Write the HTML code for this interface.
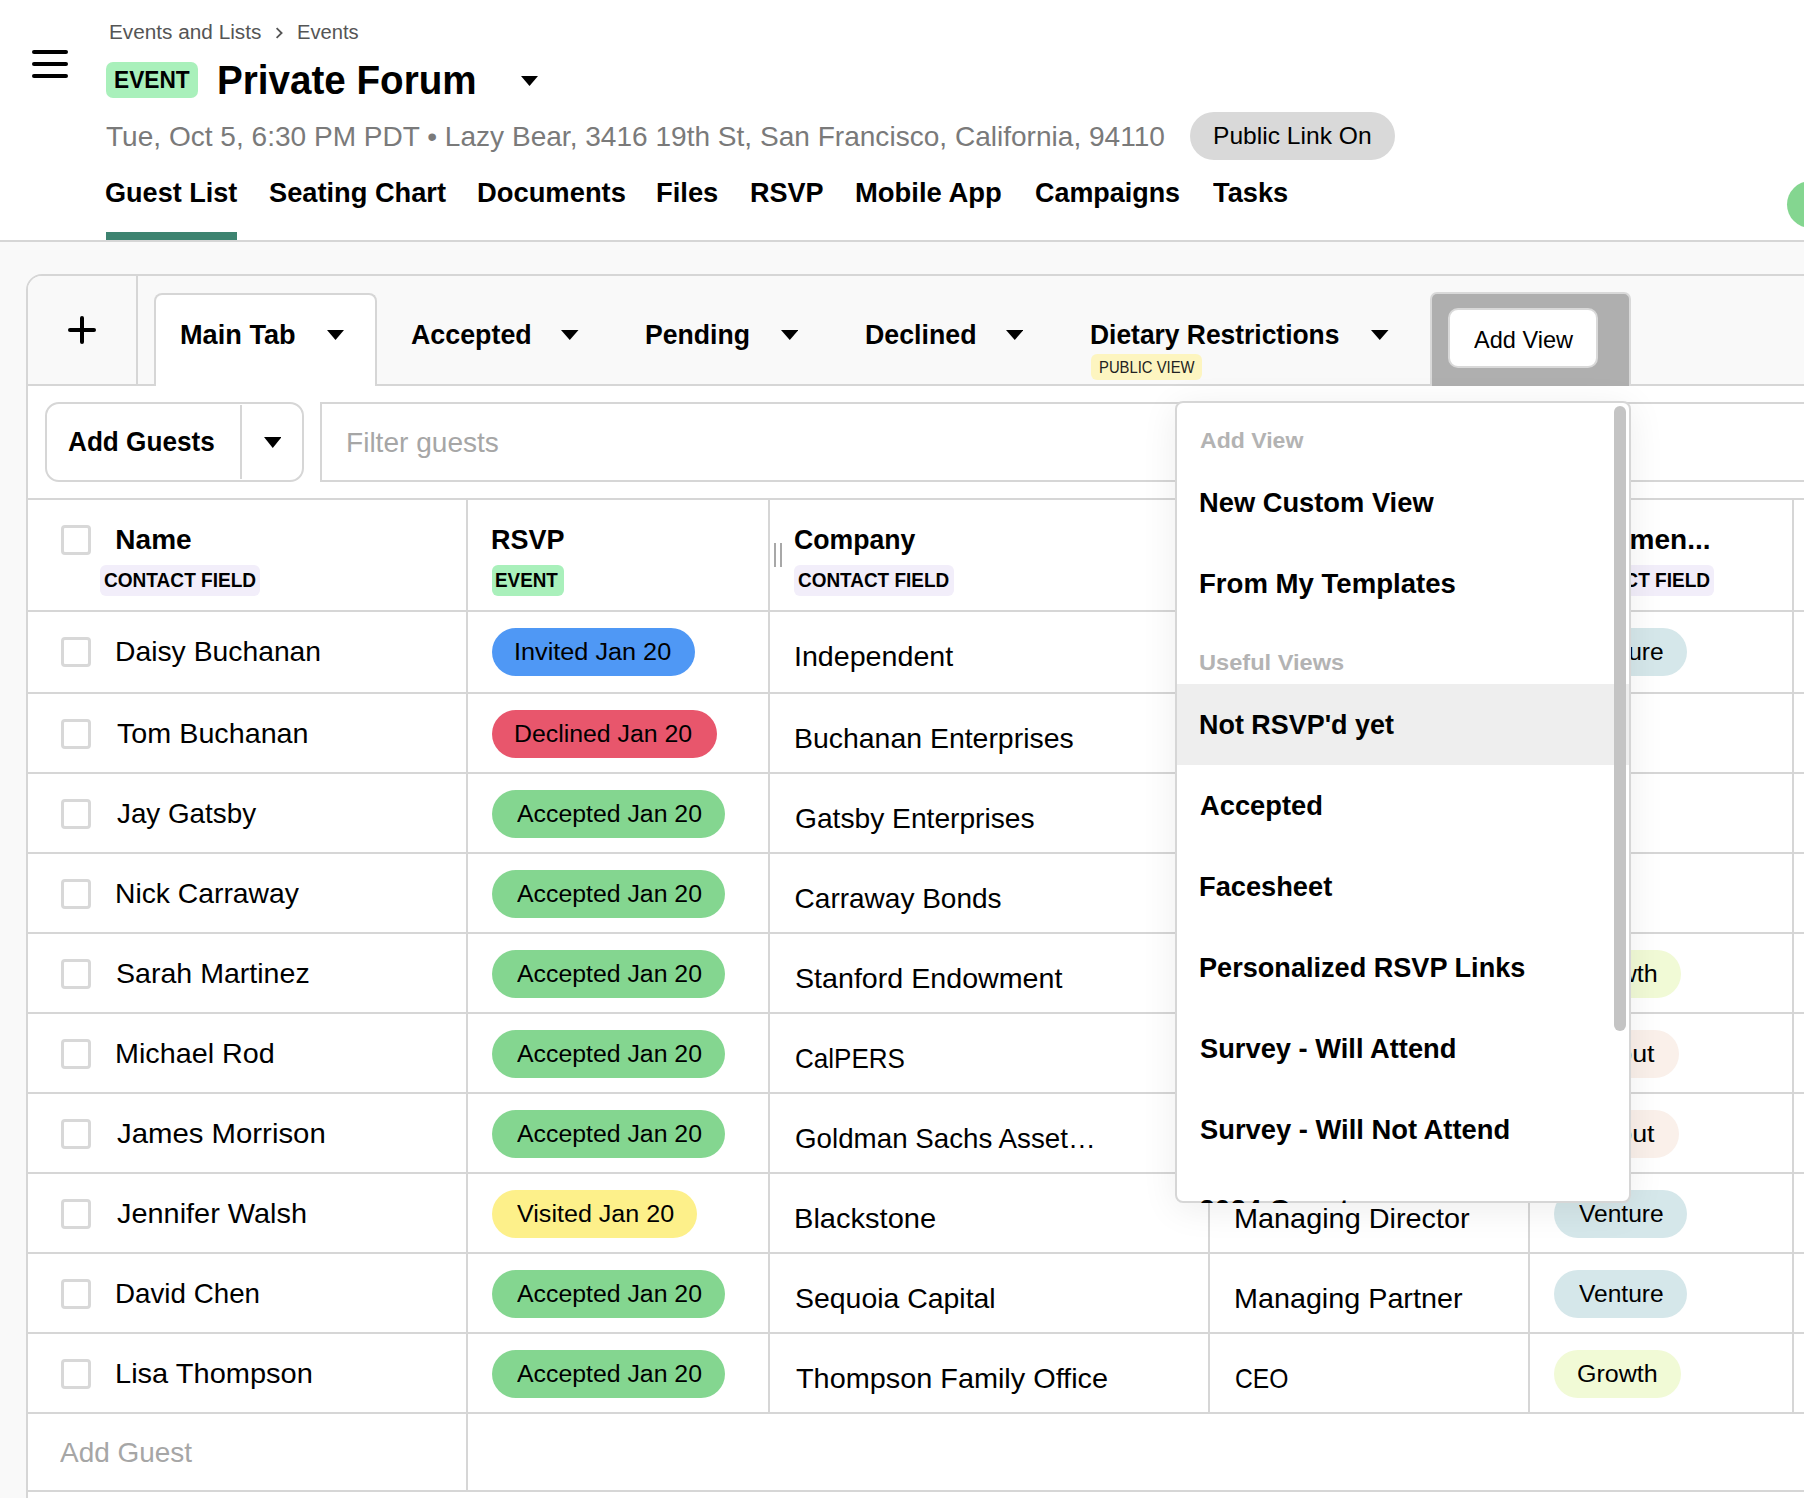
<!DOCTYPE html>
<html><head><meta charset="utf-8"><style>
html,body{margin:0;padding:0;width:1804px;height:1498px;overflow:hidden;background:#f9f9f9;font-family:"Liberation Sans",sans-serif;}
</style></head><body>
<div style="position:absolute;left:0px;top:0px;width:1804px;height:240px;background:#ffffff;"></div>
<div style="position:absolute;left:0px;top:240px;width:1804px;height:2px;background:#d6d6d6;"></div>
<div style="position:absolute;left:0px;top:242px;width:1804px;height:1256px;background:#f9f9f9;"></div>
<div style="position:absolute;left:32px;top:50.25px;width:36px;height:3.5px;background:#000;border-radius:2px;"></div>
<div style="position:absolute;left:32px;top:62.25px;width:36px;height:3.5px;background:#000;border-radius:2px;"></div>
<div style="position:absolute;left:32px;top:74.25px;width:36px;height:3.5px;background:#000;border-radius:2px;"></div>
<div style="position:absolute;left:108.94px;top:21px;font-size:20px;line-height:22px;font-weight:400;color:#555;white-space:pre;transform:scaleX(1.0381);transform-origin:0 0;">Events and Lists</div>
<svg style="position:absolute;left:274px;top:26px" width="12" height="14" viewBox="0 0 12 14"><path d="M2.6 2.2 L7.6 7 L2.6 11.8" fill="none" stroke="#555" stroke-width="1.8"/></svg>
<div style="position:absolute;left:296.99px;top:21px;font-size:20px;line-height:22px;font-weight:400;color:#555;white-space:pre;transform:scaleX(1.0085);transform-origin:0 0;">Events</div>
<div style="position:absolute;left:106px;top:62px;width:92px;height:36px;background:#a9f0bb;border-radius:7px;"></div>
<div style="position:absolute;left:113.52px;top:67px;font-size:23px;line-height:26px;font-weight:700;color:#000;white-space:pre;transform:scaleX(0.9867);transform-origin:0 0;">EVENT</div>
<div style="position:absolute;left:217.35px;top:58.3px;font-size:40px;line-height:44px;font-weight:700;color:#000;white-space:pre;transform:scaleX(0.9653);transform-origin:0 0;">Private Forum</div>
<svg style="position:absolute;left:521px;top:76px" width="17" height="10" viewBox="0 0 17 10"><path d="M0 0 L17 0 L8.5 10 Z" fill="#000"/></svg>
<div style="position:absolute;left:105.50px;top:120.5px;font-size:28px;line-height:31px;font-weight:400;color:#7a7a7a;white-space:pre;transform:scaleX(1.0021);transform-origin:0 0;">Tue, Oct 5, 6:30 PM PDT • Lazy Bear, 3416 19th St, San Francisco, California, 94110</div>
<div style="position:absolute;left:1190px;top:112px;width:205px;height:48px;background:#d9d9d9;border-radius:24px;"></div>
<div style="position:absolute;left:1213.35px;top:121.80000000000001px;font-size:24px;line-height:27px;font-weight:400;color:#000;white-space:pre;transform:scaleX(1.0248);transform-origin:0 0;">Public Link On</div>
<div style="position:absolute;left:105.03px;top:177px;font-size:28px;line-height:31px;font-weight:700;color:#000;white-space:pre;transform:scaleX(0.9668);transform-origin:0 0;">Guest List</div>
<div style="position:absolute;left:269.27px;top:177px;font-size:28px;line-height:31px;font-weight:700;color:#000;white-space:pre;transform:scaleX(0.9724);transform-origin:0 0;">Seating Chart</div>
<div style="position:absolute;left:476.89px;top:177px;font-size:28px;line-height:31px;font-weight:700;color:#000;white-space:pre;transform:scaleX(0.9766);transform-origin:0 0;">Documents</div>
<div style="position:absolute;left:656.29px;top:177px;font-size:28px;line-height:31px;font-weight:700;color:#000;white-space:pre;transform:scaleX(0.9770);transform-origin:0 0;">Files</div>
<div style="position:absolute;left:750.31px;top:177px;font-size:28px;line-height:31px;font-weight:700;color:#000;white-space:pre;transform:scaleX(0.9660);transform-origin:0 0;">RSVP</div>
<div style="position:absolute;left:854.99px;top:177px;font-size:28px;line-height:31px;font-weight:700;color:#000;white-space:pre;transform:scaleX(0.9797);transform-origin:0 0;">Mobile App</div>
<div style="position:absolute;left:1035.04px;top:177px;font-size:28px;line-height:31px;font-weight:700;color:#000;white-space:pre;transform:scaleX(0.9613);transform-origin:0 0;">Campaigns</div>
<div style="position:absolute;left:1212.76px;top:177px;font-size:28px;line-height:31px;font-weight:700;color:#000;white-space:pre;transform:scaleX(0.9737);transform-origin:0 0;">Tasks</div>
<div style="position:absolute;left:106px;top:232px;width:131px;height:8px;background:#3d8370;"></div>
<div style="position:absolute;left:1787px;top:180.5px;width:47px;height:47px;border-radius:50%;background:#84d690"></div>
<div style="position:absolute;left:26px;top:274px;width:1800px;height:1300px;background:#fff;border:2px solid #d6d6d6;border-top-left-radius:16px;box-sizing:border-box"></div>
<div style="position:absolute;left:28px;top:276px;width:1790px;height:109px;background:#f9f9f9;border-top-left-radius:14px"></div>
<div style="position:absolute;left:136px;top:276px;width:2px;height:109px;background:#d6d6d6;"></div>
<div style="position:absolute;left:28px;top:384px;width:1776px;height:2px;background:#d6d6d6;"></div>
<div style="position:absolute;left:68px;top:328px;width:28px;height:4px;background:#000;border-radius:2px;"></div>
<div style="position:absolute;left:80px;top:316px;width:4px;height:28px;background:#000;border-radius:2px;"></div>
<div style="position:absolute;left:154px;top:292.5px;width:222.5px;height:93.5px;background:#fff;border:2px solid #d6d6d6;border-bottom:none;border-radius:8px 8px 0 0;box-sizing:border-box"></div>
<div style="position:absolute;left:179.70px;top:319px;font-size:28px;line-height:31px;font-weight:700;color:#000;white-space:pre;transform:scaleX(0.9700);transform-origin:0 0;">Main Tab</div>
<svg style="position:absolute;left:326.7px;top:330px" width="17" height="10" viewBox="0 0 17 10"><path d="M0 0 L17 0 L8.5 10 Z" fill="#000"/></svg>
<div style="position:absolute;left:410.58px;top:319px;font-size:28px;line-height:31px;font-weight:700;color:#000;white-space:pre;transform:scaleX(0.9579);transform-origin:0 0;">Accepted</div>
<svg style="position:absolute;left:561px;top:330px" width="17.5" height="10" viewBox="0 0 17.5 10"><path d="M0 0 L17.5 0 L8.75 10 Z" fill="#000"/></svg>
<div style="position:absolute;left:645.24px;top:319px;font-size:28px;line-height:31px;font-weight:700;color:#000;white-space:pre;transform:scaleX(0.9499);transform-origin:0 0;">Pending</div>
<svg style="position:absolute;left:780.7px;top:330px" width="17.5" height="10" viewBox="0 0 17.5 10"><path d="M0 0 L17.5 0 L8.75 10 Z" fill="#000"/></svg>
<div style="position:absolute;left:864.53px;top:319px;font-size:28px;line-height:31px;font-weight:700;color:#000;white-space:pre;transform:scaleX(0.9554);transform-origin:0 0;">Declined</div>
<svg style="position:absolute;left:1005.7px;top:330px" width="17.5" height="10" viewBox="0 0 17.5 10"><path d="M0 0 L17.5 0 L8.75 10 Z" fill="#000"/></svg>
<div style="position:absolute;left:1090.25px;top:319px;font-size:28px;line-height:31px;font-weight:700;color:#000;white-space:pre;transform:scaleX(0.9429);transform-origin:0 0;">Dietary Restrictions</div>
<svg style="position:absolute;left:1371px;top:330px" width="17.5" height="10" viewBox="0 0 17.5 10"><path d="M0 0 L17.5 0 L8.75 10 Z" fill="#000"/></svg>
<div style="position:absolute;left:1091px;top:354px;width:111px;height:26px;background:#fdf5c0;border-radius:6px;"></div>
<div style="position:absolute;left:1098.54px;top:358.8px;font-size:16px;line-height:17px;font-weight:400;color:#222;white-space:pre;transform:scaleX(0.9268);transform-origin:0 0;">PUBLIC VIEW</div>
<div style="position:absolute;left:1430px;top:292px;width:201px;height:94px;background:#afafaf;border:2px solid #d9d9d9;border-bottom:none;border-radius:7px 7px 0 0;box-sizing:border-box"></div>
<div style="position:absolute;left:1448px;top:308px;width:150px;height:59.5px;background:#fff;border:2px solid #d9d9d9;border-radius:10px;box-sizing:border-box"></div>
<div style="position:absolute;left:1474.00px;top:326px;font-size:24px;line-height:27px;font-weight:400;color:#000;white-space:pre;transform:scaleX(0.9802);transform-origin:0 0;">Add View</div>
<div style="position:absolute;left:45px;top:402px;width:259px;height:79.5px;background:#fff;border:2px solid #d6d6d6;border-radius:14px;box-sizing:border-box"></div>
<div style="position:absolute;left:240px;top:405px;width:2px;height:74px;background:#d6d6d6;"></div>
<div style="position:absolute;left:68.10px;top:425.7px;font-size:28px;line-height:31px;font-weight:700;color:#000;white-space:pre;transform:scaleX(0.9340);transform-origin:0 0;">Add Guests</div>
<svg style="position:absolute;left:263.5px;top:437px" width="17.5" height="11" viewBox="0 0 17.5 11"><path d="M0 0 L17.5 0 L8.75 11 Z" fill="#000"/></svg>
<div style="position:absolute;left:320px;top:402px;width:1600px;height:80px;background:#fff;border:2px solid #d6d6d6;box-sizing:border-box"></div>
<div style="position:absolute;left:345.74px;top:426.7px;font-size:28px;line-height:31px;font-weight:400;color:#a6a6a6;white-space:pre;transform:scaleX(1.0023);transform-origin:0 0;">Filter guests</div>
<div style="position:absolute;left:28px;top:498px;width:1776px;height:2px;background:#d6d6d6;"></div>
<div style="position:absolute;left:28px;top:610px;width:1776px;height:2px;background:#d6d6d6;"></div>
<div style="position:absolute;left:28px;top:692px;width:1776px;height:2px;background:#d6d6d6;"></div>
<div style="position:absolute;left:28px;top:772px;width:1776px;height:2px;background:#d6d6d6;"></div>
<div style="position:absolute;left:28px;top:852px;width:1776px;height:2px;background:#d6d6d6;"></div>
<div style="position:absolute;left:28px;top:932px;width:1776px;height:2px;background:#d6d6d6;"></div>
<div style="position:absolute;left:28px;top:1012px;width:1776px;height:2px;background:#d6d6d6;"></div>
<div style="position:absolute;left:28px;top:1092px;width:1776px;height:2px;background:#d6d6d6;"></div>
<div style="position:absolute;left:28px;top:1172px;width:1776px;height:2px;background:#d6d6d6;"></div>
<div style="position:absolute;left:28px;top:1252px;width:1776px;height:2px;background:#d6d6d6;"></div>
<div style="position:absolute;left:28px;top:1332px;width:1776px;height:2px;background:#d6d6d6;"></div>
<div style="position:absolute;left:28px;top:1412px;width:1776px;height:2px;background:#d6d6d6;"></div>
<div style="position:absolute;left:28px;top:1490px;width:1776px;height:2px;background:#d6d6d6;"></div>
<div style="position:absolute;left:466px;top:500px;width:2px;height:912px;background:#d6d6d6;"></div>
<div style="position:absolute;left:768px;top:500px;width:2px;height:912px;background:#d6d6d6;"></div>
<div style="position:absolute;left:1208px;top:500px;width:2px;height:912px;background:#d6d6d6;"></div>
<div style="position:absolute;left:1528px;top:500px;width:2px;height:912px;background:#d6d6d6;"></div>
<div style="position:absolute;left:1792px;top:500px;width:2px;height:912px;background:#d6d6d6;"></div>
<div style="position:absolute;left:466px;top:1412px;width:2px;height:78px;background:#d6d6d6;"></div>
<div style="position:absolute;left:61.3px;top:525.3px;width:29.5px;height:29.5px;border:3.5px solid #d8d8d8;border-radius:4px;box-sizing:border-box;background:#fff"></div>
<div style="position:absolute;left:115.35px;top:524px;font-size:28px;line-height:31px;font-weight:700;color:#000;white-space:pre;">Name</div>
<div style="position:absolute;left:100px;top:564.5px;width:159.5px;height:31.0px;background:#f2eefa;border-radius:6px;"></div>
<div style="position:absolute;left:103.79px;top:569px;font-size:20px;line-height:22px;font-weight:700;color:#000;white-space:pre;transform:scaleX(0.9532);transform-origin:0 0;">CONTACT FIELD</div>
<div style="position:absolute;left:491.21px;top:524px;font-size:28px;line-height:31px;font-weight:700;color:#000;white-space:pre;transform:scaleX(0.9633);transform-origin:0 0;">RSVP</div>
<div style="position:absolute;left:492px;top:564.5px;width:72px;height:31.0px;background:#a9f0bb;border-radius:6px;"></div>
<div style="position:absolute;left:495.32px;top:569px;font-size:20px;line-height:22px;font-weight:700;color:#000;white-space:pre;transform:scaleX(0.9425);transform-origin:0 0;">EVENT</div>
<div style="position:absolute;left:774px;top:543px;width:2px;height:24px;background:#a8a8a8;"></div>
<div style="position:absolute;left:780px;top:543px;width:2px;height:24px;background:#a8a8a8;"></div>
<div style="position:absolute;left:793.95px;top:523.8px;font-size:28px;line-height:31px;font-weight:700;color:#000;white-space:pre;transform:scaleX(0.9510);transform-origin:0 0;">Company</div>
<div style="position:absolute;left:794px;top:564.5px;width:159.5px;height:31.0px;background:#f2eefa;border-radius:6px;"></div>
<div style="position:absolute;left:798.09px;top:569px;font-size:20px;line-height:22px;font-weight:700;color:#000;white-space:pre;transform:scaleX(0.9468);transform-origin:0 0;">CONTACT FIELD</div>
<div style="position:absolute;left:1578.25px;top:524px;font-size:28px;line-height:31px;font-weight:700;color:#000;white-space:pre;">Segmen...</div>
<div style="position:absolute;left:1554px;top:564.5px;width:160px;height:31.0px;background:#f2eefa;border-radius:6px;"></div>
<div style="position:absolute;left:1557.79px;top:569px;font-size:20px;line-height:22px;font-weight:700;color:#000;white-space:pre;transform:scaleX(0.9532);transform-origin:0 0;">CONTACT FIELD</div>
<div style="position:absolute;left:61.3px;top:637.3px;width:29.5px;height:29.5px;border:3.5px solid #d8d8d8;border-radius:4px;box-sizing:border-box;background:#fff"></div>
<div style="position:absolute;left:115.23px;top:636.2px;font-size:28px;line-height:31px;font-weight:400;color:#000;white-space:pre;transform:scaleX(1.0108);transform-origin:0 0;">Daisy Buchanan</div>
<div style="position:absolute;left:492px;top:628px;width:203px;height:47.700000000000045px;background:#4f98f5;border-radius:24px;"></div>
<div style="position:absolute;left:514.18px;top:638.8px;font-size:23.5px;line-height:26px;font-weight:400;color:#000;white-space:pre;transform:scaleX(1.0743);transform-origin:0 0;">Invited Jan 20</div>
<div style="position:absolute;left:793.54px;top:641px;font-size:28px;line-height:31px;font-weight:400;color:#000;white-space:pre;transform:scaleX(1.0222);transform-origin:0 0;">Independent</div>
<div style="position:absolute;left:1554px;top:628px;width:133px;height:47.799999999999955px;background:#d5e7ea;border-radius:24px;"></div>
<div style="position:absolute;left:1578.50px;top:638.7px;font-size:23.5px;line-height:26px;font-weight:400;color:#000;white-space:pre;transform:scaleX(1.0450);transform-origin:0 0;">Venture</div>
<div style="position:absolute;left:61.3px;top:719.3px;width:29.5px;height:29.5px;border:3.5px solid #d8d8d8;border-radius:4px;box-sizing:border-box;background:#fff"></div>
<div style="position:absolute;left:116.99px;top:718.2px;font-size:28px;line-height:31px;font-weight:400;color:#000;white-space:pre;transform:scaleX(1.0255);transform-origin:0 0;">Tom Buchanan</div>
<div style="position:absolute;left:492px;top:710px;width:224.60000000000002px;height:47.700000000000045px;background:#e8566c;border-radius:24px;"></div>
<div style="position:absolute;left:514.49px;top:720.8px;font-size:23.5px;line-height:26px;font-weight:400;color:#000;white-space:pre;transform:scaleX(1.0570);transform-origin:0 0;">Declined Jan 20</div>
<div style="position:absolute;left:793.82px;top:723px;font-size:28px;line-height:31px;font-weight:400;color:#000;white-space:pre;transform:scaleX(1.0152);transform-origin:0 0;">Buchanan Enterprises</div>
<div style="position:absolute;left:61.3px;top:799.3px;width:29.5px;height:29.5px;border:3.5px solid #d8d8d8;border-radius:4px;box-sizing:border-box;background:#fff"></div>
<div style="position:absolute;left:117.00px;top:798.2px;font-size:28px;line-height:31px;font-weight:400;color:#000;white-space:pre;transform:scaleX(0.9928);transform-origin:0 0;">Jay Gatsby</div>
<div style="position:absolute;left:492px;top:790px;width:232.60000000000002px;height:47.700000000000045px;background:#84d690;border-radius:24px;"></div>
<div style="position:absolute;left:516.60px;top:800.8px;font-size:23.5px;line-height:26px;font-weight:400;color:#000;white-space:pre;transform:scaleX(1.0565);transform-origin:0 0;">Accepted Jan 20</div>
<div style="position:absolute;left:794.84px;top:803px;font-size:28px;line-height:31px;font-weight:400;color:#000;white-space:pre;transform:scaleX(1.0064);transform-origin:0 0;">Gatsby Enterprises</div>
<div style="position:absolute;left:61.3px;top:879.3px;width:29.5px;height:29.5px;border:3.5px solid #d8d8d8;border-radius:4px;box-sizing:border-box;background:#fff"></div>
<div style="position:absolute;left:115.23px;top:878.2px;font-size:28px;line-height:31px;font-weight:400;color:#000;white-space:pre;transform:scaleX(1.0103);transform-origin:0 0;">Nick Carraway</div>
<div style="position:absolute;left:492px;top:870px;width:232.60000000000002px;height:47.700000000000045px;background:#84d690;border-radius:24px;"></div>
<div style="position:absolute;left:516.60px;top:880.8px;font-size:23.5px;line-height:26px;font-weight:400;color:#000;white-space:pre;transform:scaleX(1.0565);transform-origin:0 0;">Accepted Jan 20</div>
<div style="position:absolute;left:794.60px;top:883px;font-size:28px;line-height:31px;font-weight:400;color:#000;white-space:pre;">Carraway Bonds</div>
<div style="position:absolute;left:61.3px;top:959.3px;width:29.5px;height:29.5px;border:3.5px solid #d8d8d8;border-radius:4px;box-sizing:border-box;background:#fff"></div>
<div style="position:absolute;left:116.22px;top:958.2px;font-size:28px;line-height:31px;font-weight:400;color:#000;white-space:pre;transform:scaleX(1.0200);transform-origin:0 0;">Sarah Martinez</div>
<div style="position:absolute;left:492px;top:950px;width:232.60000000000002px;height:47.700000000000045px;background:#84d690;border-radius:24px;"></div>
<div style="position:absolute;left:516.60px;top:960.8px;font-size:23.5px;line-height:26px;font-weight:400;color:#000;white-space:pre;transform:scaleX(1.0565);transform-origin:0 0;">Accepted Jan 20</div>
<div style="position:absolute;left:794.82px;top:963px;font-size:28px;line-height:31px;font-weight:400;color:#000;white-space:pre;transform:scaleX(1.0227);transform-origin:0 0;">Stanford Endowment</div>
<div style="position:absolute;left:1554px;top:950px;width:127px;height:47.799999999999955px;background:#f1fad6;border-radius:24px;"></div>
<div style="position:absolute;left:1577.17px;top:960.7px;font-size:23.5px;line-height:26px;font-weight:400;color:#000;white-space:pre;transform:scaleX(1.0658);transform-origin:0 0;">Growth</div>
<div style="position:absolute;left:61.3px;top:1039.3px;width:29.5px;height:29.5px;border:3.5px solid #d8d8d8;border-radius:4px;box-sizing:border-box;background:#fff"></div>
<div style="position:absolute;left:115.19px;top:1038.2px;font-size:28px;line-height:31px;font-weight:400;color:#000;white-space:pre;transform:scaleX(1.0264);transform-origin:0 0;">Michael Rod</div>
<div style="position:absolute;left:492px;top:1030px;width:232.60000000000002px;height:47.700000000000045px;background:#84d690;border-radius:24px;"></div>
<div style="position:absolute;left:516.60px;top:1040.8px;font-size:23.5px;line-height:26px;font-weight:400;color:#000;white-space:pre;transform:scaleX(1.0565);transform-origin:0 0;">Accepted Jan 20</div>
<div style="position:absolute;left:794.71px;top:1043px;font-size:28px;line-height:31px;font-weight:400;color:#000;white-space:pre;transform:scaleX(0.9299);transform-origin:0 0;">CalPERS</div>
<div style="position:absolute;left:1554px;top:1030px;width:125px;height:47.799999999999955px;background:#faf0ea;border-radius:24px;"></div>
<div style="position:absolute;left:1571.22px;top:1040.7px;font-size:23.5px;line-height:26px;font-weight:400;color:#000;white-space:pre;transform:scaleX(1.1423);transform-origin:0 0;">Buyout</div>
<div style="position:absolute;left:61.3px;top:1119.3px;width:29.5px;height:29.5px;border:3.5px solid #d8d8d8;border-radius:4px;box-sizing:border-box;background:#fff"></div>
<div style="position:absolute;left:116.98px;top:1118.2px;font-size:28px;line-height:31px;font-weight:400;color:#000;white-space:pre;transform:scaleX(1.0480);transform-origin:0 0;">James Morrison</div>
<div style="position:absolute;left:492px;top:1110px;width:232.60000000000002px;height:47.700000000000045px;background:#84d690;border-radius:24px;"></div>
<div style="position:absolute;left:516.60px;top:1120.8px;font-size:23.5px;line-height:26px;font-weight:400;color:#000;white-space:pre;transform:scaleX(1.0565);transform-origin:0 0;">Accepted Jan 20</div>
<div style="position:absolute;left:794.86px;top:1123px;font-size:28px;line-height:31px;font-weight:400;color:#000;white-space:pre;transform:scaleX(0.9907);transform-origin:0 0;">Goldman Sachs Asset…</div>
<div style="position:absolute;left:1554px;top:1110px;width:125px;height:47.799999999999955px;background:#faf0ea;border-radius:24px;"></div>
<div style="position:absolute;left:1571.22px;top:1120.7px;font-size:23.5px;line-height:26px;font-weight:400;color:#000;white-space:pre;transform:scaleX(1.1423);transform-origin:0 0;">Buyout</div>
<div style="position:absolute;left:61.3px;top:1199.3px;width:29.5px;height:29.5px;border:3.5px solid #d8d8d8;border-radius:4px;box-sizing:border-box;background:#fff"></div>
<div style="position:absolute;left:116.98px;top:1198.2px;font-size:28px;line-height:31px;font-weight:400;color:#000;white-space:pre;transform:scaleX(1.0316);transform-origin:0 0;">Jennifer Walsh</div>
<div style="position:absolute;left:492px;top:1190px;width:204.70000000000005px;height:47.700000000000045px;background:#fdf08a;border-radius:24px;"></div>
<div style="position:absolute;left:516.60px;top:1200.8px;font-size:23.5px;line-height:26px;font-weight:400;color:#000;white-space:pre;transform:scaleX(1.0674);transform-origin:0 0;">Visited Jan 20</div>
<div style="position:absolute;left:793.76px;top:1203px;font-size:28px;line-height:31px;font-weight:400;color:#000;white-space:pre;transform:scaleX(1.0382);transform-origin:0 0;">Blackstone</div>
<div style="position:absolute;left:1233.88px;top:1203px;font-size:28px;line-height:31px;font-weight:400;color:#000;white-space:pre;transform:scaleX(1.0301);transform-origin:0 0;">Managing Director</div>
<div style="position:absolute;left:1554px;top:1190px;width:133px;height:47.799999999999955px;background:#d5e7ea;border-radius:24px;"></div>
<div style="position:absolute;left:1578.50px;top:1200.7px;font-size:23.5px;line-height:26px;font-weight:400;color:#000;white-space:pre;transform:scaleX(1.0450);transform-origin:0 0;">Venture</div>
<div style="position:absolute;left:61.3px;top:1279.3px;width:29.5px;height:29.5px;border:3.5px solid #d8d8d8;border-radius:4px;box-sizing:border-box;background:#fff"></div>
<div style="position:absolute;left:115.27px;top:1278.2px;font-size:28px;line-height:31px;font-weight:400;color:#000;white-space:pre;transform:scaleX(0.9912);transform-origin:0 0;">David Chen</div>
<div style="position:absolute;left:492px;top:1270px;width:232.60000000000002px;height:47.700000000000045px;background:#84d690;border-radius:24px;"></div>
<div style="position:absolute;left:516.60px;top:1280.8px;font-size:23.5px;line-height:26px;font-weight:400;color:#000;white-space:pre;transform:scaleX(1.0565);transform-origin:0 0;">Accepted Jan 20</div>
<div style="position:absolute;left:794.83px;top:1283px;font-size:28px;line-height:31px;font-weight:400;color:#000;white-space:pre;transform:scaleX(1.0151);transform-origin:0 0;">Sequoia Capital</div>
<div style="position:absolute;left:1233.89px;top:1283px;font-size:28px;line-height:31px;font-weight:400;color:#000;white-space:pre;transform:scaleX(1.0264);transform-origin:0 0;">Managing Partner</div>
<div style="position:absolute;left:1554px;top:1270px;width:133px;height:47.799999999999955px;background:#d5e7ea;border-radius:24px;"></div>
<div style="position:absolute;left:1578.50px;top:1280.7px;font-size:23.5px;line-height:26px;font-weight:400;color:#000;white-space:pre;transform:scaleX(1.0450);transform-origin:0 0;">Venture</div>
<div style="position:absolute;left:61.3px;top:1359.3px;width:29.5px;height:29.5px;border:3.5px solid #d8d8d8;border-radius:4px;box-sizing:border-box;background:#fff"></div>
<div style="position:absolute;left:115.17px;top:1358.2px;font-size:28px;line-height:31px;font-weight:400;color:#000;white-space:pre;transform:scaleX(1.0363);transform-origin:0 0;">Lisa Thompson</div>
<div style="position:absolute;left:492px;top:1350px;width:232.60000000000002px;height:47.700000000000045px;background:#84d690;border-radius:24px;"></div>
<div style="position:absolute;left:516.60px;top:1360.8px;font-size:23.5px;line-height:26px;font-weight:400;color:#000;white-space:pre;transform:scaleX(1.0565);transform-origin:0 0;">Accepted Jan 20</div>
<div style="position:absolute;left:795.58px;top:1363px;font-size:28px;line-height:31px;font-weight:400;color:#000;white-space:pre;transform:scaleX(1.0300);transform-origin:0 0;">Thompson Family Office</div>
<div style="position:absolute;left:1234.88px;top:1363px;font-size:28px;line-height:31px;font-weight:400;color:#000;white-space:pre;transform:scaleX(0.8797);transform-origin:0 0;">CEO</div>
<div style="position:absolute;left:1554px;top:1350px;width:127px;height:47.799999999999955px;background:#f1fad6;border-radius:24px;"></div>
<div style="position:absolute;left:1577.17px;top:1360.7px;font-size:23.5px;line-height:26px;font-weight:400;color:#000;white-space:pre;transform:scaleX(1.0658);transform-origin:0 0;">Growth</div>
<div style="position:absolute;left:60.40px;top:1436.7px;font-size:28px;line-height:31px;font-weight:400;color:#a6a6a6;white-space:pre;transform:scaleX(0.9977);transform-origin:0 0;">Add Guest</div>
<div style="position:absolute;left:1175px;top:401px;width:456px;height:802px;background:#fff;border:2px solid #d6d6d6;border-radius:8px;box-sizing:border-box;box-shadow:0 6px 36px rgba(0,0,0,0.075);overflow:hidden">
<div style="position:absolute;left:0px;top:281px;width:452px;height:81px;background:#eeeeee;"></div>
<div style="position:absolute;left:437px;top:3px;width:12px;height:625px;background:#c4c4c4;border-radius:6px;"></div>
<div style="position:absolute;left:22.78px;top:24.69999999999999px;font-size:22px;line-height:25px;font-weight:700;color:#b3b3b3;white-space:pre;transform:scaleX(1.0483);transform-origin:0 0;">Add View</div>
<div style="position:absolute;left:21.59px;top:84px;font-size:28px;line-height:31px;font-weight:700;color:#000;white-space:pre;transform:scaleX(0.9749);transform-origin:0 0;">New Custom View</div>
<div style="position:absolute;left:21.58px;top:165.20000000000005px;font-size:28px;line-height:31px;font-weight:700;color:#000;white-space:pre;transform:scaleX(0.9845);transform-origin:0 0;">From My Templates</div>
<div style="position:absolute;left:21.96px;top:247.20000000000005px;font-size:22px;line-height:25px;font-weight:700;color:#b3b3b3;white-space:pre;transform:scaleX(1.0732);transform-origin:0 0;">Useful Views</div>
<div style="position:absolute;left:21.62px;top:306px;font-size:28px;line-height:31px;font-weight:700;color:#000;white-space:pre;transform:scaleX(0.9614);transform-origin:0 0;">Not RSVP&#x27;d yet</div>
<div style="position:absolute;left:22.57px;top:387px;font-size:28px;line-height:31px;font-weight:700;color:#000;white-space:pre;transform:scaleX(0.9749);transform-origin:0 0;">Accepted</div>
<div style="position:absolute;left:21.60px;top:468px;font-size:28px;line-height:31px;font-weight:700;color:#000;white-space:pre;transform:scaleX(0.9726);transform-origin:0 0;">Facesheet</div>
<div style="position:absolute;left:21.61px;top:549px;font-size:28px;line-height:31px;font-weight:700;color:#000;white-space:pre;transform:scaleX(0.9679);transform-origin:0 0;">Personalized RSVP Links</div>
<div style="position:absolute;left:22.57px;top:630.4000000000001px;font-size:28px;line-height:31px;font-weight:700;color:#000;white-space:pre;transform:scaleX(0.9742);transform-origin:0 0;">Survey - Will Attend</div>
<div style="position:absolute;left:22.57px;top:711.3px;font-size:28px;line-height:31px;font-weight:700;color:#000;white-space:pre;transform:scaleX(0.9766);transform-origin:0 0;">Survey - Will Not Attend</div>
</div>
<div style="position:absolute;left:1177px;top:1185px;width:430px;height:18px;overflow:hidden">
<div style="position:absolute;left:22.30px;top:9px;font-size:28px;line-height:31px;font-weight:700;color:#000;white-space:pre;">2024 Guests</div>
</div>
</body></html>
